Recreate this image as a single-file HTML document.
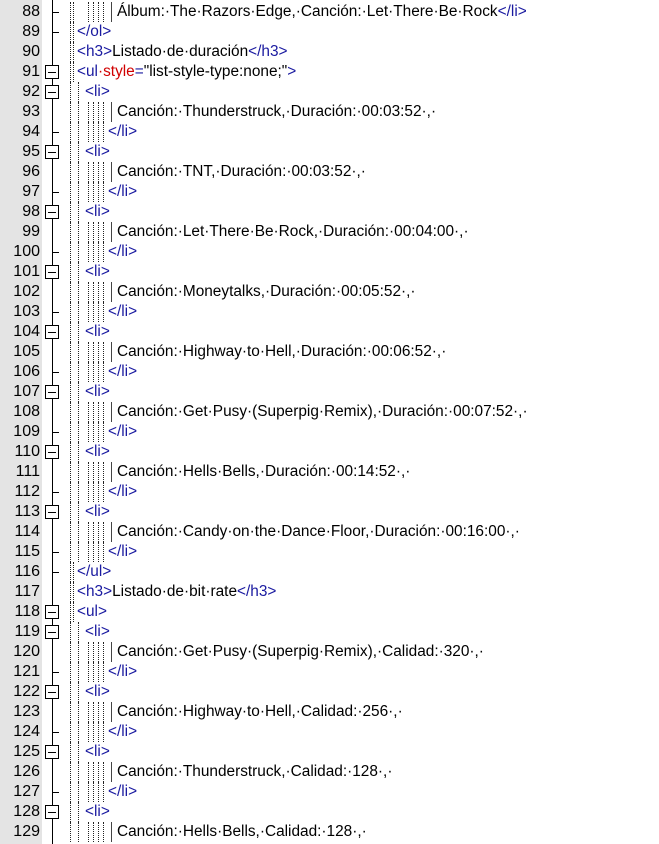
<!DOCTYPE html>
<html><head><meta charset="utf-8"><style>
body{margin:0;width:659px;height:844px;overflow:hidden;background:#fff;font-family:"Liberation Sans",sans-serif;font-size:15.4px;position:relative}
.num{position:absolute;left:0;top:0;width:42px;height:844px;background:#e4e4e4}
.fold{position:absolute;left:42px;top:0;width:20px;height:844px;background:#fff;border-left:0}
.r{position:absolute;left:0;height:20px;width:659px}
.n{position:absolute;left:0;width:40px;text-align:right;line-height:20px;color:#000;font-size:16px}
.t{position:absolute;line-height:20px;white-space:pre;color:#000}
.v{position:absolute;left:52px;top:0;width:0;height:20px;border-left:1px solid #000}
.b{position:absolute;left:45px;top:3px;width:12px;height:12px;border:1px solid #000;background:#fff;z-index:6}
.b:after{content:"";position:absolute;left:2px;top:6px;width:8px;height:1px;background:#000}
.k{position:absolute;left:52px;top:10px;width:7px;height:1px;background:#000}
.g{position:absolute;top:0;height:20px;width:0;border-left:1px dotted #222}
.s{position:absolute;top:0;height:20px;width:1px;background:#444}
.tg{color:#1a1aa0}.at{color:#d00000}
</style></head><body>
<div class="num"></div><div class="fold"></div>
<svg style="position:absolute;left:0;top:0" width="659" height="844"><line x1="52.5" y1="0" x2="52.5" y2="844" stroke="#000" stroke-width="1"/></svg>

<div class="r" style="top:2px"><span class="n">88</span><i class="v"></i><i class="k"></i><i class="g" style="left:70px"></i><i class="g" style="left:73px"></i><i class="g" style="left:88px"></i><i class="g" style="left:93px"></i><i class="g" style="left:98px"></i><i class="g" style="left:103px"></i><i class="s" style="left:111px"></i><span class="t" style="left:117px">Álbum:·The·Razors·Edge,·Canción:·Let·There·Be·Rock<span class="tg">&lt;/li&gt;</span></span></div>
<div class="r" style="top:22px"><span class="n">89</span><i class="v"></i><i class="k"></i><i class="g" style="left:70px"></i><i class="g" style="left:73px"></i><span class="t tg" style="left:77px">&lt;/ol&gt;</span></div>
<div class="r" style="top:42px"><span class="n">90</span><i class="v"></i><i class="g" style="left:70px"></i><i class="g" style="left:73px"></i><span class="t" style="left:77px"><span class="tg">&lt;h3&gt;</span>Listado·de·duración<span class="tg">&lt;/h3&gt;</span></span></div>
<div class="r" style="top:62px"><span class="n">91</span><i class="v"></i><i class="b"></i><i class="g" style="left:70px"></i><i class="g" style="left:73px"></i><span class="t" style="left:77px"><span class="tg">&lt;ul</span><span class="at">·style</span><span class="tg">=</span>"list-style-type:none;"<span class="tg">&gt;</span></span></div>

<div class="r" style="top:82px"><span class="n">92</span><i class="v"></i><i class="b"></i><i class="g" style="left:70px"></i><i class="g" style="left:78px"></i><span class="t tg" style="left:85px">&lt;li&gt;</span></div>
<div class="r" style="top:102px"><span class="n">93</span><i class="v"></i><i class="g" style="left:70px"></i><i class="g" style="left:78px"></i><i class="g" style="left:88px"></i><i class="g" style="left:93px"></i><i class="g" style="left:98px"></i><i class="g" style="left:103px"></i><i class="s" style="left:111px"></i><span class="t" style="left:117px">Canción:·Thunderstruck,·Duración:·00:03:52·,·</span></div>
<div class="r" style="top:122px"><span class="n">94</span><i class="v"></i><i class="k"></i><i class="g" style="left:70px"></i><i class="g" style="left:78px"></i><i class="g" style="left:88px"></i><i class="g" style="left:93px"></i><i class="g" style="left:98px"></i><i class="g" style="left:103px"></i><span class="t tg" style="left:108px">&lt;/li&gt;</span></div>

<div class="r" style="top:142px"><span class="n">95</span><i class="v"></i><i class="b"></i><i class="g" style="left:70px"></i><i class="g" style="left:78px"></i><span class="t tg" style="left:85px">&lt;li&gt;</span></div>
<div class="r" style="top:162px"><span class="n">96</span><i class="v"></i><i class="g" style="left:70px"></i><i class="g" style="left:78px"></i><i class="g" style="left:88px"></i><i class="g" style="left:93px"></i><i class="g" style="left:98px"></i><i class="g" style="left:103px"></i><i class="s" style="left:111px"></i><span class="t" style="left:117px">Canción:·TNT,·Duración:·00:03:52·,·</span></div>
<div class="r" style="top:182px"><span class="n">97</span><i class="v"></i><i class="k"></i><i class="g" style="left:70px"></i><i class="g" style="left:78px"></i><i class="g" style="left:88px"></i><i class="g" style="left:93px"></i><i class="g" style="left:98px"></i><i class="g" style="left:103px"></i><span class="t tg" style="left:108px">&lt;/li&gt;</span></div>

<div class="r" style="top:202px"><span class="n">98</span><i class="v"></i><i class="b"></i><i class="g" style="left:70px"></i><i class="g" style="left:78px"></i><span class="t tg" style="left:85px">&lt;li&gt;</span></div>
<div class="r" style="top:222px"><span class="n">99</span><i class="v"></i><i class="g" style="left:70px"></i><i class="g" style="left:78px"></i><i class="g" style="left:88px"></i><i class="g" style="left:93px"></i><i class="g" style="left:98px"></i><i class="g" style="left:103px"></i><i class="s" style="left:111px"></i><span class="t" style="left:117px">Canción:·Let·There·Be·Rock,·Duración:·00:04:00·,·</span></div>
<div class="r" style="top:242px"><span class="n">100</span><i class="v"></i><i class="k"></i><i class="g" style="left:70px"></i><i class="g" style="left:78px"></i><i class="g" style="left:88px"></i><i class="g" style="left:93px"></i><i class="g" style="left:98px"></i><i class="g" style="left:103px"></i><span class="t tg" style="left:108px">&lt;/li&gt;</span></div>

<div class="r" style="top:262px"><span class="n">101</span><i class="v"></i><i class="b"></i><i class="g" style="left:70px"></i><i class="g" style="left:78px"></i><span class="t tg" style="left:85px">&lt;li&gt;</span></div>
<div class="r" style="top:282px"><span class="n">102</span><i class="v"></i><i class="g" style="left:70px"></i><i class="g" style="left:78px"></i><i class="g" style="left:88px"></i><i class="g" style="left:93px"></i><i class="g" style="left:98px"></i><i class="g" style="left:103px"></i><i class="s" style="left:111px"></i><span class="t" style="left:117px">Canción:·Moneytalks,·Duración:·00:05:52·,·</span></div>
<div class="r" style="top:302px"><span class="n">103</span><i class="v"></i><i class="k"></i><i class="g" style="left:70px"></i><i class="g" style="left:78px"></i><i class="g" style="left:88px"></i><i class="g" style="left:93px"></i><i class="g" style="left:98px"></i><i class="g" style="left:103px"></i><span class="t tg" style="left:108px">&lt;/li&gt;</span></div>

<div class="r" style="top:322px"><span class="n">104</span><i class="v"></i><i class="b"></i><i class="g" style="left:70px"></i><i class="g" style="left:78px"></i><span class="t tg" style="left:85px">&lt;li&gt;</span></div>
<div class="r" style="top:342px"><span class="n">105</span><i class="v"></i><i class="g" style="left:70px"></i><i class="g" style="left:78px"></i><i class="g" style="left:88px"></i><i class="g" style="left:93px"></i><i class="g" style="left:98px"></i><i class="g" style="left:103px"></i><i class="s" style="left:111px"></i><span class="t" style="left:117px">Canción:·Highway·to·Hell,·Duración:·00:06:52·,·</span></div>
<div class="r" style="top:362px"><span class="n">106</span><i class="v"></i><i class="k"></i><i class="g" style="left:70px"></i><i class="g" style="left:78px"></i><i class="g" style="left:88px"></i><i class="g" style="left:93px"></i><i class="g" style="left:98px"></i><i class="g" style="left:103px"></i><span class="t tg" style="left:108px">&lt;/li&gt;</span></div>

<div class="r" style="top:382px"><span class="n">107</span><i class="v"></i><i class="b"></i><i class="g" style="left:70px"></i><i class="g" style="left:78px"></i><span class="t tg" style="left:85px">&lt;li&gt;</span></div>
<div class="r" style="top:402px"><span class="n">108</span><i class="v"></i><i class="g" style="left:70px"></i><i class="g" style="left:78px"></i><i class="g" style="left:88px"></i><i class="g" style="left:93px"></i><i class="g" style="left:98px"></i><i class="g" style="left:103px"></i><i class="s" style="left:111px"></i><span class="t" style="left:117px">Canción:·Get·Pusy·(Superpig·Remix),·Duración:·00:07:52·,·</span></div>
<div class="r" style="top:422px"><span class="n">109</span><i class="v"></i><i class="k"></i><i class="g" style="left:70px"></i><i class="g" style="left:78px"></i><i class="g" style="left:88px"></i><i class="g" style="left:93px"></i><i class="g" style="left:98px"></i><i class="g" style="left:103px"></i><span class="t tg" style="left:108px">&lt;/li&gt;</span></div>

<div class="r" style="top:442px"><span class="n">110</span><i class="v"></i><i class="b"></i><i class="g" style="left:70px"></i><i class="g" style="left:78px"></i><span class="t tg" style="left:85px">&lt;li&gt;</span></div>
<div class="r" style="top:462px"><span class="n">111</span><i class="v"></i><i class="g" style="left:70px"></i><i class="g" style="left:78px"></i><i class="g" style="left:88px"></i><i class="g" style="left:93px"></i><i class="g" style="left:98px"></i><i class="g" style="left:103px"></i><i class="s" style="left:111px"></i><span class="t" style="left:117px">Canción:·Hells·Bells,·Duración:·00:14:52·,·</span></div>
<div class="r" style="top:482px"><span class="n">112</span><i class="v"></i><i class="k"></i><i class="g" style="left:70px"></i><i class="g" style="left:78px"></i><i class="g" style="left:88px"></i><i class="g" style="left:93px"></i><i class="g" style="left:98px"></i><i class="g" style="left:103px"></i><span class="t tg" style="left:108px">&lt;/li&gt;</span></div>

<div class="r" style="top:502px"><span class="n">113</span><i class="v"></i><i class="b"></i><i class="g" style="left:70px"></i><i class="g" style="left:78px"></i><span class="t tg" style="left:85px">&lt;li&gt;</span></div>
<div class="r" style="top:522px"><span class="n">114</span><i class="v"></i><i class="g" style="left:70px"></i><i class="g" style="left:78px"></i><i class="g" style="left:88px"></i><i class="g" style="left:93px"></i><i class="g" style="left:98px"></i><i class="g" style="left:103px"></i><i class="s" style="left:111px"></i><span class="t" style="left:117px">Canción:·Candy·on·the·Dance·Floor,·Duración:·00:16:00·,·</span></div>
<div class="r" style="top:542px"><span class="n">115</span><i class="v"></i><i class="k"></i><i class="g" style="left:70px"></i><i class="g" style="left:78px"></i><i class="g" style="left:88px"></i><i class="g" style="left:93px"></i><i class="g" style="left:98px"></i><i class="g" style="left:103px"></i><span class="t tg" style="left:108px">&lt;/li&gt;</span></div>

<div class="r" style="top:562px"><span class="n">116</span><i class="v"></i><i class="k"></i><i class="g" style="left:70px"></i><i class="g" style="left:73px"></i><span class="t tg" style="left:77px">&lt;/ul&gt;</span></div>
<div class="r" style="top:582px"><span class="n">117</span><i class="v"></i><i class="g" style="left:70px"></i><i class="g" style="left:73px"></i><span class="t" style="left:77px"><span class="tg">&lt;h3&gt;</span>Listado·de·bit·rate<span class="tg">&lt;/h3&gt;</span></span></div>
<div class="r" style="top:602px"><span class="n">118</span><i class="v"></i><i class="b"></i><i class="g" style="left:70px"></i><i class="g" style="left:73px"></i><span class="t tg" style="left:77px">&lt;ul&gt;</span></div>

<div class="r" style="top:622px"><span class="n">119</span><i class="v"></i><i class="b"></i><i class="g" style="left:70px"></i><i class="g" style="left:78px"></i><span class="t tg" style="left:85px">&lt;li&gt;</span></div>
<div class="r" style="top:642px"><span class="n">120</span><i class="v"></i><i class="g" style="left:70px"></i><i class="g" style="left:78px"></i><i class="g" style="left:88px"></i><i class="g" style="left:93px"></i><i class="g" style="left:98px"></i><i class="g" style="left:103px"></i><i class="s" style="left:111px"></i><span class="t" style="left:117px">Canción:·Get·Pusy·(Superpig·Remix),·Calidad:·320·,·</span></div>
<div class="r" style="top:662px"><span class="n">121</span><i class="v"></i><i class="k"></i><i class="g" style="left:70px"></i><i class="g" style="left:78px"></i><i class="g" style="left:88px"></i><i class="g" style="left:93px"></i><i class="g" style="left:98px"></i><i class="g" style="left:103px"></i><span class="t tg" style="left:108px">&lt;/li&gt;</span></div>

<div class="r" style="top:682px"><span class="n">122</span><i class="v"></i><i class="b"></i><i class="g" style="left:70px"></i><i class="g" style="left:78px"></i><span class="t tg" style="left:85px">&lt;li&gt;</span></div>
<div class="r" style="top:702px"><span class="n">123</span><i class="v"></i><i class="g" style="left:70px"></i><i class="g" style="left:78px"></i><i class="g" style="left:88px"></i><i class="g" style="left:93px"></i><i class="g" style="left:98px"></i><i class="g" style="left:103px"></i><i class="s" style="left:111px"></i><span class="t" style="left:117px">Canción:·Highway·to·Hell,·Calidad:·256·,·</span></div>
<div class="r" style="top:722px"><span class="n">124</span><i class="v"></i><i class="k"></i><i class="g" style="left:70px"></i><i class="g" style="left:78px"></i><i class="g" style="left:88px"></i><i class="g" style="left:93px"></i><i class="g" style="left:98px"></i><i class="g" style="left:103px"></i><span class="t tg" style="left:108px">&lt;/li&gt;</span></div>

<div class="r" style="top:742px"><span class="n">125</span><i class="v"></i><i class="b"></i><i class="g" style="left:70px"></i><i class="g" style="left:78px"></i><span class="t tg" style="left:85px">&lt;li&gt;</span></div>
<div class="r" style="top:762px"><span class="n">126</span><i class="v"></i><i class="g" style="left:70px"></i><i class="g" style="left:78px"></i><i class="g" style="left:88px"></i><i class="g" style="left:93px"></i><i class="g" style="left:98px"></i><i class="g" style="left:103px"></i><i class="s" style="left:111px"></i><span class="t" style="left:117px">Canción:·Thunderstruck,·Calidad:·128·,·</span></div>
<div class="r" style="top:782px"><span class="n">127</span><i class="v"></i><i class="k"></i><i class="g" style="left:70px"></i><i class="g" style="left:78px"></i><i class="g" style="left:88px"></i><i class="g" style="left:93px"></i><i class="g" style="left:98px"></i><i class="g" style="left:103px"></i><span class="t tg" style="left:108px">&lt;/li&gt;</span></div>

<div class="r" style="top:802px"><span class="n">128</span><i class="v"></i><i class="b"></i><i class="g" style="left:70px"></i><i class="g" style="left:78px"></i><span class="t tg" style="left:85px">&lt;li&gt;</span></div>
<div class="r" style="top:822px"><span class="n">129</span><i class="v"></i><i class="g" style="left:70px"></i><i class="g" style="left:78px"></i><i class="g" style="left:88px"></i><i class="g" style="left:93px"></i><i class="g" style="left:98px"></i><i class="g" style="left:103px"></i><i class="s" style="left:111px"></i><span class="t" style="left:117px">Canción:·Hells·Bells,·Calidad:·128·,·</span></div>
</body></html>
